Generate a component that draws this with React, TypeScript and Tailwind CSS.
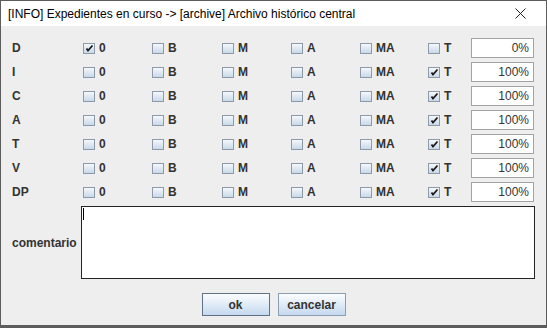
const rows = [
  { label: "D", checked: [true, false, false, false, false, false], pct: "0%" },
  { label: "I", checked: [false, false, false, false, false, true], pct: "100%" },
  { label: "C", checked: [false, false, false, false, false, true], pct: "100%" },
  { label: "A", checked: [false, false, false, false, false, true], pct: "100%" },
  { label: "T", checked: [false, false, false, false, false, true], pct: "100%" },
  { label: "V", checked: [false, false, false, false, false, true], pct: "100%" },
  { label: "DP", checked: [false, false, false, false, false, true], pct: "100%" },
];

const levels = ["0", "B", "M", "A", "MA", "T"];

function Check({ on, text }: { on: boolean; text: string }) {
  return (
    <div className="flex items-center gap-[4px]">
      <span className="flex h-[11px] w-[12px] items-center justify-center border border-[#8d9aa8] bg-gradient-to-b from-[#f4f8fc] to-[#c9d9ea]">
        {on && (
          <svg width="9" height="8" viewBox="0 0 9 8">
            <path d="M1.5 4.5 L3 6.5 L7.5 1.5" stroke="#1a1a1a" strokeWidth="1.8" fill="none" />
          </svg>
        )}
      </span>
      <span className="text-[12px] font-bold text-[#333]">{text}</span>
    </div>
  );
}

export default function App() {
  return (
    <div
      className="flex h-[328px] w-[547px] flex-col border border-b-[3px] border-[#5c5c5c] bg-[#eeeeee]"
      style={{ fontFamily: "'Liberation Sans', Arial, sans-serif" }}
    >
      <div className="flex h-[25px] shrink-0 items-center justify-between bg-white pl-[7px] pr-[20px]">
        <span className="text-[12px] text-black">
          [INFO] Expedientes en curso -&gt; [archive] Archivo histórico central
        </span>
        <svg width="11" height="11" viewBox="0 0 11 11">
          <path d="M0.5 0.5 L10.5 10.5 M10.5 0.5 L0.5 10.5" stroke="#222" strokeWidth="1" />
        </svg>
      </div>
      <div className="flex flex-col pl-[11px] pt-[12px]">
        {rows.map((r) => (
          <div
            key={r.label}
            className="mb-[4px] grid h-[20px] grid-cols-[71px_69px_70px_69px_69px_68px_43px_63px] items-center"
          >
            <span className="text-[12px] font-bold text-[#333]">{r.label}</span>
            {levels.map((l, i) => (
              <Check key={l} on={r.checked[i]} text={l} />
            ))}
            <div className="flex h-[20px] items-center justify-end border border-[#a3a3a3] bg-white pr-[4px] text-[12px] text-[#333]">
              {r.pct}
            </div>
          </div>
        ))}
        <div className="grid grid-cols-[69px_454px] items-center">
          <span className="text-[12px] font-bold text-[#333]">comentario</span>
          <div className="relative h-[73px] border-[1.5px] border-[#222] bg-white">
            <span className="absolute left-[1px] top-[1px] h-[12px] w-[1px] bg-black" />
          </div>
        </div>
      </div>
      <div className="mt-[14px] flex justify-center gap-[8px]">
        <button className="h-[23px] w-[68px] border border-[#5f7184] bg-gradient-to-b from-[#fbfdff] to-[#c5d9ee] text-[12px] font-bold text-[#333]">
          ok
        </button>
        <button className="h-[23px] w-[68px] border border-[#8b9db2] bg-gradient-to-b from-[#fbfdff] to-[#c5d9ee] text-[12px] font-bold text-[#333]">
          cancelar
        </button>
      </div>
    </div>
  );
}
